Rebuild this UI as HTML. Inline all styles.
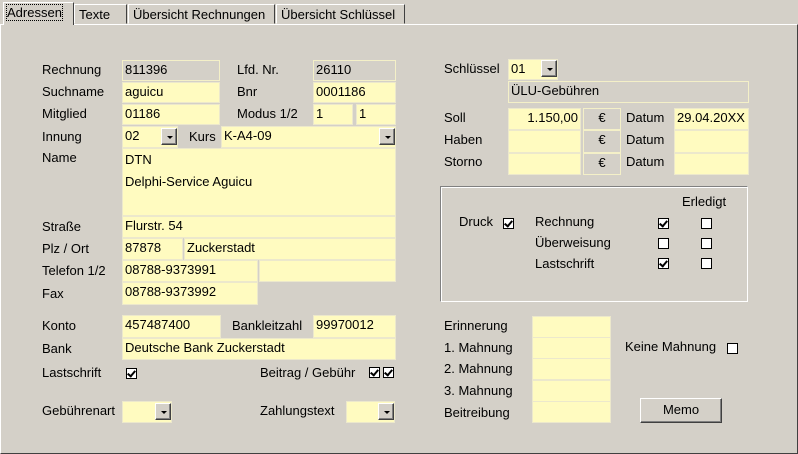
<!DOCTYPE html>
<html><head><meta charset="utf-8"><style>
*{box-sizing:border-box}
body{margin:0;width:798px;height:454px;background:#d4d0c8;font-family:"Liberation Sans",sans-serif;font-size:13px;color:#000;position:relative;overflow:hidden}
.a{position:absolute;white-space:nowrap}
.l{position:absolute;white-space:nowrap;line-height:14px}
.f{position:absolute;background:#fffbc0;border:1px solid #ece8cc;padding:1px 2px;line-height:16px;white-space:nowrap}
.g{position:absolute;background:#d4d0c8;border:1px solid #f4f0c8;padding:1px 2px;line-height:16px;white-space:nowrap}
.b{position:absolute;width:16px;height:17px;background:#d4d0c8;border:1px solid;border-color:#fff #404040 #404040 #fff;box-shadow:inset -1px -1px #808080}
.b:after{content:"";position:absolute;left:5px;top:7px;border-left:3px solid transparent;border-right:3px solid transparent;border-top:3px solid #000}
.c{position:absolute;width:11px;height:11px;background:#fff;border:1px solid #000}
.c.k:after{content:"";position:absolute;left:2px;top:0px;width:3px;height:6px;border:solid #000;border-width:0 2px 2px 0;transform:rotate(40deg)}
.tab{position:absolute;top:4px;height:20px;border:1px solid;border-color:#fff #404040 transparent #fff;font-size:13px;padding:2px 4px;background:#d4d0c8}
</style></head><body>
<div class="a" style="left:0;top:24px;width:798px;height:430px;border:1px solid;border-color:#fff #404040 #404040 #fff"></div>
<div class="tab" style="left:3px;top:2px;height:23px;width:71px;border-bottom:none;z-index:2;padding-left:3px"><span style="outline:1px dotted #000">Adressen</span></div>
<div class="tab" style="left:74px;width:53px">Texte</div>
<div class="tab" style="left:128px;width:147px">Übersicht Rechnungen</div>
<div class="tab" style="left:276px;width:129px">Übersicht Schlüssel</div>

<div class="l" style="left:42px;top:63px">Rechnung</div><div class="g" style="left:122px;top:60px;width:98px;height:21px">811396</div>
<div class="l" style="left:237px;top:63px">Lfd. Nr.</div><div class="g" style="left:313px;top:60px;width:83px;height:21px">26110</div>
<div class="l" style="left:42px;top:85px">Suchname</div><div class="f" style="left:122px;top:82px;width:98px;height:21px">aguicu</div>
<div class="l" style="left:237px;top:85px">Bnr</div><div class="f" style="left:313px;top:82px;width:83px;height:21px">0001186</div>
<div class="l" style="left:42px;top:107px">Mitglied</div><div class="f" style="left:122px;top:104px;width:98px;height:21px">01186</div>
<div class="l" style="left:237px;top:107px">Modus 1/2</div><div class="f" style="left:313px;top:104px;width:40px;height:21px">1</div><div class="f" style="left:356px;top:104px;width:40px;height:21px">1</div>
<div class="l" style="left:42px;top:130px">Innung</div><div class="f" style="left:122px;top:126px;width:56px;height:22px">02</div><div class="b" style="left:161px;top:128px"></div>
<div class="l" style="left:189px;top:130px">Kurs</div><div class="f" style="left:221px;top:126px;width:175px;height:22px">K-A4-09</div><div class="b" style="left:379px;top:128px"></div>
<div class="l" style="left:42px;top:151px">Name</div><div class="f" style="left:122px;top:148px;width:274px;height:68px;line-height:22px;white-space:normal;padding-top:0">DTN<br>Delphi-Service Aguicu</div>
<div class="l" style="left:42px;top:220px">Straße</div><div class="f" style="left:122px;top:216px;width:274px;height:22px">Flurstr. 54</div>
<div class="l" style="left:42px;top:242px">Plz / Ort</div><div class="f" style="left:122px;top:238px;width:61px;height:22px">87878</div><div class="f" style="left:184px;top:238px;width:212px;height:22px">Zuckerstadt</div>
<div class="l" style="left:42px;top:264px">Telefon 1/2</div><div class="f" style="left:122px;top:260px;width:136px;height:22px">08788-9373991</div><div class="f" style="left:259px;top:260px;width:137px;height:22px"></div>
<div class="l" style="left:42px;top:287px">Fax</div><div class="f" style="left:122px;top:282px;width:136px;height:23px">08788-9373992</div>

<div class="l" style="left:42px;top:319px">Konto</div><div class="f" style="left:122px;top:315px;width:99px;height:23px">457487400</div>
<div class="l" style="left:232px;top:319px">Bankleitzahl</div><div class="f" style="left:313px;top:315px;width:83px;height:23px">99970012</div>
<div class="l" style="left:42px;top:342px">Bank</div><div class="f" style="left:122px;top:338px;width:274px;height:22px">Deutsche Bank Zuckerstadt</div>
<div class="l" style="left:42px;top:366px">Lastschrift</div><div class="c k" style="left:126px;top:368px"></div>
<div class="l" style="left:260px;top:366px">Beitrag / Gebühr</div><div class="c k" style="left:369px;top:367px"></div><div class="c k" style="left:383px;top:367px"></div>
<div class="l" style="left:42px;top:404px">Gebührenart</div><div class="f" style="left:122px;top:401px;width:50px;height:22px"></div><div class="b" style="left:155px;top:403px"></div>
<div class="l" style="left:260px;top:404px">Zahlungstext</div><div class="f" style="left:346px;top:401px;width:49px;height:22px"></div><div class="b" style="left:378px;top:403px"></div>

<div class="l" style="left:444px;top:62px">Schlüssel</div><div class="f" style="left:508px;top:59px;width:50px;height:21px">01</div><div class="b" style="left:541px;top:60px"></div>
<div class="g" style="left:508px;top:81px;width:241px;height:22px">ÜLU-Gebühren</div>
<div class="l" style="left:444px;top:111px">Soll</div><div class="f" style="left:508px;top:108px;width:73px;height:22px;text-align:right">1.150,00</div><div class="g" style="left:583px;top:108px;width:38px;height:22px;text-align:center">€</div>
<div class="l" style="left:626px;top:111px">Datum</div><div class="f" style="left:674px;top:108px;width:75px;height:22px">29.04.20XX</div>
<div class="l" style="left:444px;top:133px">Haben</div><div class="f" style="left:508px;top:130px;width:73px;height:23px"></div><div class="g" style="left:583px;top:130px;width:38px;height:23px;text-align:center">€</div>
<div class="l" style="left:626px;top:133px">Datum</div><div class="f" style="left:674px;top:130px;width:75px;height:23px"></div>
<div class="l" style="left:444px;top:155px">Storno</div><div class="f" style="left:508px;top:153px;width:73px;height:22px"></div><div class="g" style="left:583px;top:153px;width:38px;height:22px;text-align:center">€</div>
<div class="l" style="left:626px;top:155px">Datum</div><div class="f" style="left:674px;top:153px;width:75px;height:22px"></div>

<div class="a" style="left:440px;top:186px;width:308px;height:116px;border:1px solid;border-color:#808080 #fff #fff #808080;box-shadow:inset 1px 1px #fff,1px 1px #808080 inset"></div>
<div class="l" style="left:682px;top:195px">Erledigt</div>
<div class="l" style="left:459px;top:215px">Druck</div><div class="c k" style="left:503px;top:218px"></div>
<div class="l" style="left:535px;top:215px">Rechnung</div><div class="c k" style="left:658px;top:218px"></div><div class="c" style="left:701px;top:218px"></div>
<div class="l" style="left:535px;top:236px">Überweisung</div><div class="c" style="left:658px;top:238px"></div><div class="c" style="left:701px;top:238px"></div>
<div class="l" style="left:535px;top:257px">Lastschrift</div><div class="c k" style="left:658px;top:258px"></div><div class="c" style="left:701px;top:258px"></div>

<div class="l" style="left:444px;top:319px">Erinnerung</div><div class="f" style="left:532px;top:316px;width:79px;height:22px"></div>
<div class="l" style="left:444px;top:341px">1. Mahnung</div><div class="f" style="left:532px;top:337px;width:79px;height:22px"></div>
<div class="l" style="left:444px;top:362px">2. Mahnung</div><div class="f" style="left:532px;top:358px;width:79px;height:22px"></div>
<div class="l" style="left:444px;top:384px">3. Mahnung</div><div class="f" style="left:532px;top:380px;width:79px;height:22px"></div>
<div class="l" style="left:444px;top:406px">Beitreibung</div><div class="f" style="left:532px;top:401px;width:79px;height:22px"></div>
<div class="l" style="left:625px;top:340px">Keine Mahnung</div><div class="c" style="left:727px;top:343px"></div>
<div class="a" style="left:640px;top:398px;width:82px;height:25px;border:1px solid;border-color:#fff #404040 #404040 #fff;box-shadow:inset -1px -1px #808080;text-align:center;line-height:22px">Memo</div>
</body></html>
